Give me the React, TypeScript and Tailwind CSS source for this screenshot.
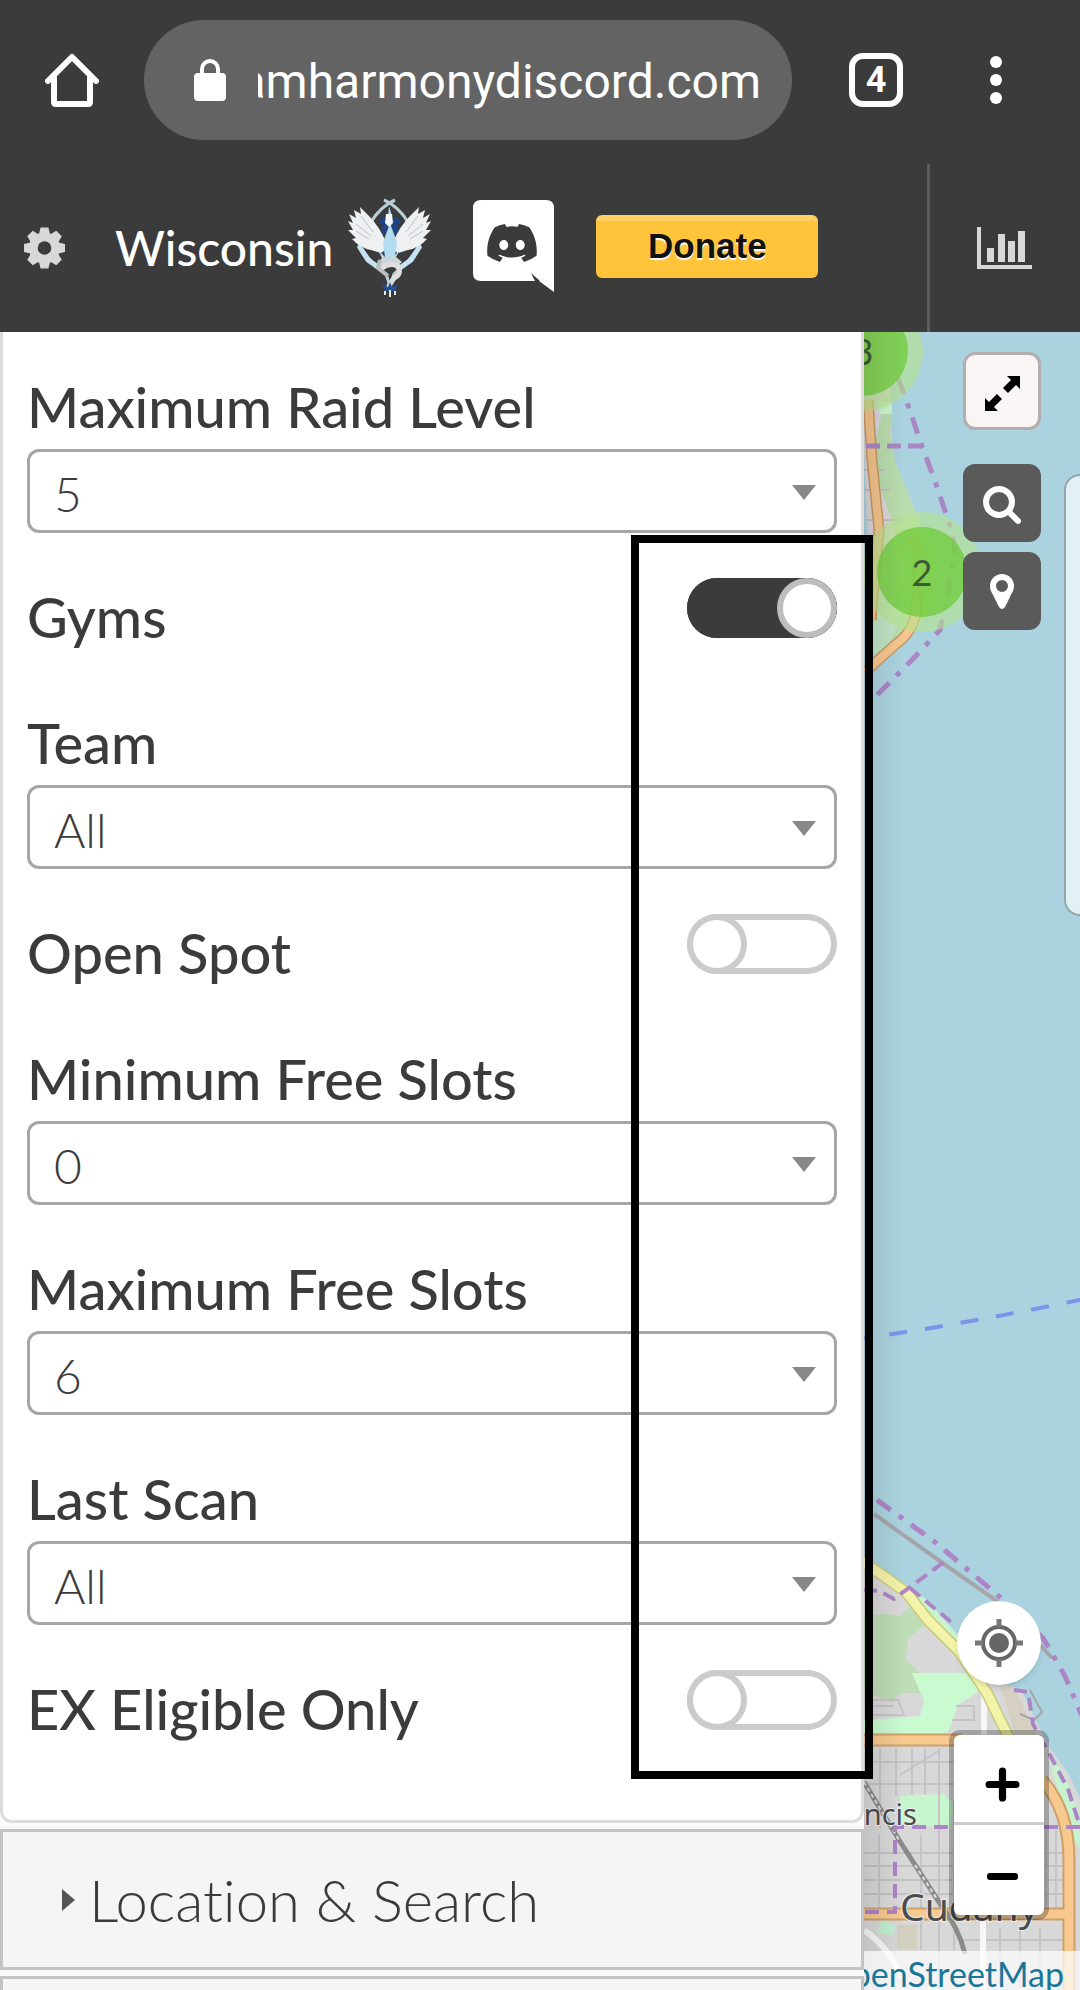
import { useId } from "react";
import { FaDiscord } from "react-icons/fa";

function HomeIcon() {
  return (
    <svg className="size-[54px]" viewBox="0 0 54 54" fill="none" stroke="#fff" strokeWidth="6" strokeLinecap="round" strokeLinejoin="round">
      <path d="M3 28 27 4l24 24" />
      <path d="M9 25v24q0 2 2 2h32q2 0 2-2V25" />
    </svg>
  );
}

function LockIcon() {
  return (
    <svg className="h-[42px] w-8 shrink-0" viewBox="0 0 32 42">
      <rect y="14" width="32" height="28" rx="4" fill="#fff" />
      <path d="M8 16v-6a8 8 0 0 1 16 0v6" fill="none" stroke="#fff" strokeWidth="4" />
    </svg>
  );
}

function GearIcon() {
  return (
    <svg className="h-[42px] w-[41px]" viewBox="-21 -21 42 42">
      <g fill="#d8d8d8">
        {[0, 45, 90, 135].map((a) => (
          <path key={a} transform={`rotate(${a})`} d="M-4-21H4L6-13V13L4 21H-4L-6 13V-13Z" />
        ))}
        <circle r="16" />
      </g>
      <circle r="7" fill="#3b3b3b" />
    </svg>
  );
}

function BirdCrest() {
  return (
    <svg className="h-[100px] w-[83px]" viewBox="0 0 83 100" role="img" aria-label="Team crest">
      <path d="M36 2Q50 8 60 24L72 48 61 62 46 76 42 88 38 76 22 62 11 48 23 24Q33 8 47 2" fill="none" stroke="#b9cfd8" strokeWidth="3" />
      <path d="M11 48 20 62 34 72M72 48 63 62 49 72" fill="none" stroke="#c4e3f3" strokeWidth="5" />
      <path d="M34 18l-3 6 4 4-3 6 7 3h6l7-3-3-6 4-4-4-6-3 3-4-5-4 5z" fill="#1f4382" />
      <path d="M32 44l-4 10 8 2h12l8-2-4-10z" fill="#2a4f8c" />
      {["", "translate(83 0) scale(-1 1)"].map((t) => (
        <g key={t} transform={t} fill="#eef0f1">
          <path d="M38 44Q31 28 21 18L12 9l1 7-7-4 2 8-7-4 4 9-5-2 5 9-5 0 8 8-4 1q8 9 19 11l10 3 8-6z" />
          <path d="M13 18l12 16M8 26l15 12M8 33l13 8" stroke="#bcc3c8" strokeWidth="1" />
        </g>
      ))}
      <path d="M41 8l3 10-1 10 6 16-2 15-5 6-5-6-2-15 6-16-1-10z" fill="#b4dcf0" />
      <path d="M38 16h6l1 9-4 4-4-4z" fill="#f2f8fc" />
      <path d="M30 52l4 8-6 6 7 3 6-4 6 5 7-6-6-5 4-7-8 8h-6z" fill="#ced6da" />
      <path d="M34 70q8-6 16-2 4 8-4 12l-5 8" fill="none" stroke="#dedede" strokeWidth="5" strokeLinecap="round" />
      <path d="M32 62l-2 8 10 8" fill="none" stroke="#b9bec1" strokeWidth="4" />
      <path d="M34 86l6 3 2-5 2 5 6-3-3 7H37z" fill="#24509a" />
      <path d="M37 93v4M42 92v7M47 93v4" stroke="#e7e7e7" strokeWidth="2" />
    </svg>
  );
}

function ChartIcon() {
  return (
    <svg className="h-[42px] w-[55px]" viewBox="0 0 55 42" fill="#d8d8d8">
      <path d="M0 0h4v38h51v4H0zM10 21h7v14h-7zM21 7h7v28h-7zM31 14h7v21h-7zM41 4h7v31h-7z" />
    </svg>
  );
}

function BrowserBar() {
  return (
    <div className="flex items-center pt-5 pr-[78px] pb-6 pl-[45px]">
      <button aria-label="Home"><HomeIcon /></button>
      <div className="mr-[57px] ml-[45px] flex h-[120px] min-w-0 flex-1 items-center gap-8 rounded-full bg-[#636363] pr-[31px] pl-[50px]">
        <LockIcon />
        <div className="flex min-w-0 flex-1 justify-end overflow-hidden pt-1">
          <span className="font-['Roboto',sans-serif] text-[48px] leading-[60px] text-white">amharmonydiscord.com</span>
        </div>
      </div>
      <button aria-label="Open tabs" className="mr-[87px] flex size-[54px] items-center justify-center rounded-[14px] border-[6px] border-white font-['Roboto',sans-serif] text-[36px] leading-none font-bold text-white">
        4
      </button>
      <button aria-label="More options" className="flex flex-col gap-1.5">
        <span className="size-3 rounded-full bg-white" />
        <span className="size-3 rounded-full bg-white" />
        <span className="size-3 rounded-full bg-white" />
      </button>
    </div>
  );
}

function SiteBar() {
  return (
    <div className="flex h-[168px] items-stretch">
      <div className="flex flex-1 items-center pl-6">
        <button aria-label="Settings"><GearIcon /></button>
        <h1 className="ml-[50px] text-[48px] leading-[60px] font-medium text-white">Wisconsin</h1>
        <div className="ml-[15px]"><BirdCrest /></div>
        <a href="#discord" aria-label="Discord" className="relative ml-[42px] block pb-1">
          <svg className="h-[92px] w-[81px]" viewBox="0 0 81 92">
            <path d="M8 0h65q8 0 8 8v84L66 81H8q-8 0-8-8V8q0-8 8-8z" fill="#fff" />
            <path d="M58 73l4 8h5z" fill="#3b3b3b" />
          </svg>
          <FaDiscord className="absolute top-4 left-3 size-[54px] text-[#3b3b3b]" />
        </a>
        <button className="mb-1 ml-[42px] h-[63px] w-[222px] rounded-md border-t-[6px] border-[#ffcf66] bg-[#ffc439] pb-2 font-['Liberation_Sans',sans-serif] text-[35px] leading-none font-bold text-[#111] [text-shadow:0_2px_1px_#fff]">
          Donate
        </button>
      </div>
      <div className="flex w-[153px] items-center border-l-[3px] border-[#5c5c5c] pl-[47px]">
        <button aria-label="Statistics"><ChartIcon /></button>
      </div>
    </div>
  );
}

function SelectRow({ label, value }: { label: string; value: string }) {
  const id = useId();
  return (
    <div>
      <label htmlFor={id} className="flex h-[126px] items-end text-[56px] leading-[84px] font-medium">{label}</label>
      <div className="relative">
        <select id={id} defaultValue={value} className="h-[84px] w-full appearance-none rounded-xl border-[3px] border-[#a6a6a6] bg-white pt-1.5 pl-6 text-[48px] leading-[72px] font-light">
          <option>{value}</option>
        </select>
        <svg className="pointer-events-none absolute top-9 right-[21px] h-[15px] w-6" viewBox="0 0 24 15">
          <path d="M0 0h24L12 15z" fill="#888" />
        </svg>
      </div>
    </div>
  );
}

function ToggleRow({ label, on = false }: { label: string; on?: boolean }) {
  const id = useId();
  return (
    <div className="flex h-[126px] items-end justify-between">
      <label htmlFor={id} className="text-[56px] leading-[84px] font-medium">{label}</label>
      <input
        id={id}
        type="checkbox"
        role="switch"
        defaultChecked={on}
        className="mb-[21px] h-[60px] w-[150px] appearance-none rounded-full bg-white ring-[6px] ring-[#cbcbcb] ring-inset before:block before:size-[60px] before:rounded-full before:border-[6px] before:border-[#cbcbcb] before:bg-white checked:bg-[#3b3b3b] checked:ring-[#3b3b3b] checked:before:ml-[90px] checked:before:border-[#bdbdbd]"
      />
    </div>
  );
}

function Sidebar() {
  return (
    <aside className="relative z-10 w-4/5 shrink-0 bg-[#fafafa]">
      <section className="rounded-b-xl border-x-[3px] border-b-[3px] border-[#dcdcdc] bg-white px-6 pb-[69px]">
        <div className="-mt-[9px]">
          <SelectRow label="Maximum Raid Level" value="5" />
          <ToggleRow label="Gyms" on />
          <SelectRow label="Team" value="All" />
          <ToggleRow label="Open Spot" />
          <SelectRow label="Minimum Free Slots" value="0" />
          <SelectRow label="Maximum Free Slots" value="6" />
          <SelectRow label="Last Scan" value="All" />
          <ToggleRow label="EX Eligible Only" />
        </div>
      </section>
      <button className="mt-1.5 flex h-[141px] w-full items-center gap-3.5 border-[3px] border-[#c4c4c4] bg-[#f5f5f5] pl-[59px] text-[58px] leading-[72px] font-light [font-variant-ligatures:none]">
        <svg className="h-[22px] w-[13px]" viewBox="0 0 13 22">
          <path d="M0 0l13 11L0 22z" fill="#555" />
        </svg>
        Location &amp; Search
      </button>
      <div className="mt-1.5 h-[141px] border-[3px] border-[#c4c4c4] bg-[#f5f5f5]" />
      <div className="pointer-events-none absolute top-[203px] -right-[9px] h-[1244px] w-[242px] border-8 border-black" />
    </aside>
  );
}

function MapDrawing() {
  return (
    <svg className="absolute inset-0 h-full w-full" viewBox="864 332 216 1658" preserveAspectRatio="xMinYMin slice" fill="none">
      {/* northern shore */}
      <path d="M860 332h31v100l4 30 10 24 13 32 14 30 8 30-10 32-20 25-38 38z" fill="#d9d6d9" />
      <path d="M886 395l6 17-2 20 5 30 10 24 13 32 14 30 8 30-10 32-20 25-38 38v-50l22-20 12-30-10-40-16-46-8-30z" fill="#b9dcae" />
      <path d="M878 402h14v12h-12z" fill="#c9f4d0" />
      <path d="M872 590l30 20-10 30-20 18z" fill="#bfe3c4" />
      <path d="M864 470h20M864 490h26M866 520h40" stroke="#c2bec4" strokeWidth="2" />
      <path d="M868 400l4 60 7 70-8 90" stroke="#c79a62" strokeWidth="11" />
      <path d="M868 400l4 60 7 70-8 90" stroke="#f4c48c" strokeWidth="8" />
      <path d="M910 536q10 10 9 26l-3 50q-3 20-20 32l-31 28" stroke="#c79a62" strokeWidth="11" />
      <path d="M910 536q10 10 9 26l-3 50q-3 20-20 32l-31 28" stroke="#f6c68e" strokeWidth="8" />
      <g stroke="#a987c4" strokeWidth="5">
        <path d="M898 378l12 33 12 35 14 38 14 42 5 22-8 50-7 32-30 32-38 38" strokeDasharray="17 10 5 10" />
        <path d="M866 446h56" strokeDasharray="14 7" />
      </g>
      {/* ferry route */}
      <path d="M860 1339q110-16 224-40" stroke="#7b93ea" strokeWidth="4" strokeDasharray="18 18" strokeDashoffset="6" />
      {/* southern shore */}
      <path d="M860 1562h12l28 27 30 16 24 30 32 28 20 24 16 4 13 28 17 32 16 22 12 25v192H860z" fill="#d9d8d9" />
      <path d="M895 1588l30 10 32 36 8 20-22-12z" fill="#c9f3cf" />
      <path d="M864 1616q24-4 36 0l10-10 14 20-16 12-2 22 20 18-4 15h-22l-8 10-28-12z" fill="#bedcb5" />
      <path d="M912 1673h64l12 12-30 20-6 18-6 12h-82v-15l56-4 4-15z" fill="#c9fad0" />
      <path d="M1000 1685l15 2 16 38 16 30-30-15z" fill="#d5d0c2" />
      <path d="M1048 1752l16 22 16 40v34l-14-22z" fill="#c6f3cd" />
      <path d="M900 1796l44-2 10 10-4 26-50-8z" fill="#c6f6cd" />
      <path d="M882 1920l14 6-4 10-16-3z" fill="#c1efd1" />
      <path d="M897 1925h20v24h-20z" fill="#d3cfbf" />
      <g stroke="#c6c3c8" strokeWidth="2">
        <path d="M864 1700h34l6 15h-40M864 1706h30M956 1706h18v14h-22M864 1762h90M864 1784h90M864 1853h208M864 1866h208M864 1880h208M864 1894h208M880 1748v80M896 1748v48M912 1748v46M925 1748v46M939 1748v260M921 1835v115M879 1835v75M954 1800v150M1046 1830v80M1056 1830v80M900 1775l40-25M1000 1928v60M1020 1928v60M1040 1928v60M964 1940h100" />
      </g>
      <path d="M874 1514l70 50 60 42 48 52" stroke="#a5a5ab" strokeWidth="4" />
      <path d="M1030 1690l12 22-8 8-14-6" stroke="#a5a5ab" strokeWidth="2" />
      <path d="M984 1695v45M983 1915v75M864 1930q24 16 38 48" stroke="#f7f7f7" strokeWidth="6" />
      <path d="M860 1560l25 17 22 16 20 26 32 32 28 42 22 45" stroke="#c9ca7c" strokeWidth="12" />
      <path d="M860 1560l25 17 22 16 20 26 32 32 28 42 22 45" stroke="#f3f3a9" strokeWidth="9" />
      <path d="M864 1740h98M864 1914h208M1042 1780q27 30 27 80v130" stroke="#cda069" strokeWidth="13" />
      <path d="M864 1740h98M864 1914h208M1042 1780q27 30 27 80v130" stroke="#f7c98f" strokeWidth="9" />
      <path d="M864 1782l35 58 40 62q20 26 26 52" stroke="#8a8a8a" strokeWidth="5" />
      <path d="M864 1782l35 58M915 1865l22 34" stroke="#dcdcdc" strokeWidth="2" strokeDasharray="4 3" />
      <g stroke="#ad84c6" strokeWidth="5">
        <path d="M877 1500l58 42 66 56 42 40 22 38 17 40" strokeDasharray="17 10 5 10" />
        <path d="M864 1590l15 1 15 8 16-12 34-25M910 1588l46 38M1014 1690l14 2 5 32 17 31 18 34 12 37" strokeDasharray="13 7" strokeWidth="4" />
        <path d="M1080 1827H895v85h-31" strokeDasharray="14 8" strokeWidth="4" />
      </g>
      <g fontFamily="'Noto Sans', sans-serif" fill="#4c4c4c" stroke="#eee" strokeWidth="2" paintOrder="stroke">
        <text x="917" y="1825" fontSize="29" textAnchor="end">St. Francis</text>
        <text x="900" y="1921" fontSize="39">Cudahy</text>
      </g>
    </svg>
  );
}

function Cluster({ count }: { count: number }) {
  return (
    <button className="flex size-[120px] items-center justify-center rounded-full bg-[#b5e28c]/60">
      <span className="flex size-[90px] items-center justify-center rounded-full bg-[#6ecc39]/75 text-[36px] leading-none text-[#3b5a33]">{count}</span>
    </button>
  );
}

function MapPane() {
  return (
    <main className="relative flex-1 overflow-hidden bg-[#aad3df]">
      <MapDrawing />
      <div className="absolute -top-[41px] -left-[61px]"><Cluster count={3} /></div>
      <div className="absolute top-[180px] -left-[2px]"><Cluster count={2} /></div>
      <div className="absolute inset-y-0 left-0 w-10 bg-linear-to-r from-black/10 to-transparent" />
      <div className="absolute top-5 right-[39px] flex flex-col">
        <button aria-label="Full screen" className="flex size-[78px] items-center justify-center rounded-xl border-[3px] border-[#b3adad] bg-[#f9f5f5] pt-1">
          <svg className="size-[35px]" viewBox="0 0 35 35">
            <path d="M35 0v13l-4-4-8 8-5-5 8-8-4-4zM0 35V22l4 4 8-8 5 5-8 8 4 4z" />
          </svg>
        </button>
        <button aria-label="Search" className="mt-[34px] flex size-[78px] items-center justify-center rounded-xl bg-[#5a5a5a] pt-1">
          <svg className="size-[38px]" viewBox="0 0 38 38" fill="none" stroke="#fff" strokeWidth="6" strokeLinecap="round">
            <circle cx="16" cy="16" r="13" />
            <path d="M26 26l9 9" />
          </svg>
        </button>
        <button aria-label="My location" className="mt-2.5 flex size-[78px] items-center justify-center rounded-xl bg-[#5a5a5a]">
          <svg className="h-[35px] w-6" viewBox="0 0 24 35">
            <path fill="#fff" fillRule="evenodd" d="M12 0a12 12 0 0 1 12 12c0 5-3 8-4 11l-5 10q-3 4-6 0L4 23C3 20 0 17 0 12A12 12 0 0 1 12 0zm0 6a6 6 0 1 0 0 12 6 6 0 0 0 0-12z" />
          </svg>
        </button>
      </div>
      <div className="absolute top-[142px] right-0 h-[442px] w-4 rounded-l-2xl border-y-2 border-l-2 border-[#93a5ab] bg-[#e3f1f4]" />
      <div className="absolute right-9 bottom-[75px] flex flex-col items-center">
        <button aria-label="Locate me" className="mb-[50px] flex size-[84px] items-center justify-center rounded-full bg-white shadow-md">
          <svg className="size-12" viewBox="0 0 48 48" fill="none" stroke="#666" strokeWidth="4">
            <circle cx="24" cy="24" r="16" />
            <circle cx="24" cy="24" r="10" fill="#666" stroke="none" />
            <path d="M24 0v8M24 40v8M0 24h8M40 24h8" stroke="#777" strokeWidth="5" />
          </svg>
        </button>
        <div className="flex flex-col rounded-md bg-white ring-[5px] ring-black/25">
          <button aria-label="Zoom in" className="flex h-[90px] w-[90px] items-center justify-center border-b-[3px] border-[#ccc] pt-3 pl-1.5">
            <svg className="size-[35px]" viewBox="0 0 34 34" stroke="#000" strokeWidth="7" strokeLinecap="round">
              <path d="M17 4v26M4 17h26" />
            </svg>
          </button>
          <button aria-label="Zoom out" className="flex h-[90px] w-[90px] items-center justify-center pt-3 pl-1.5">
            <svg className="h-[7px] w-[31px]" viewBox="0 0 31 7">
              <rect width="31" height="7" rx="3" />
            </svg>
          </button>
        </div>
      </div>
      <div className="absolute inset-x-0 bottom-0 flex h-[39px] items-end justify-end bg-white/70 pr-4">
        <a href="#openstreetmap" className="text-[34px] leading-[32px] text-[#1a7799]">OpenStreetMap</a>
      </div>
    </main>
  );
}

export default function App() {
  return (
    <div className="flex h-screen flex-col overflow-hidden font-['Lato',sans-serif] text-[#3b3b3b]">
      <header className="relative z-20 shrink-0 bg-[#3b3b3b]">
        <BrowserBar />
        <SiteBar />
      </header>
      <div className="flex min-h-0 flex-1">
        <Sidebar />
        <MapPane />
      </div>
    </div>
  );
}
